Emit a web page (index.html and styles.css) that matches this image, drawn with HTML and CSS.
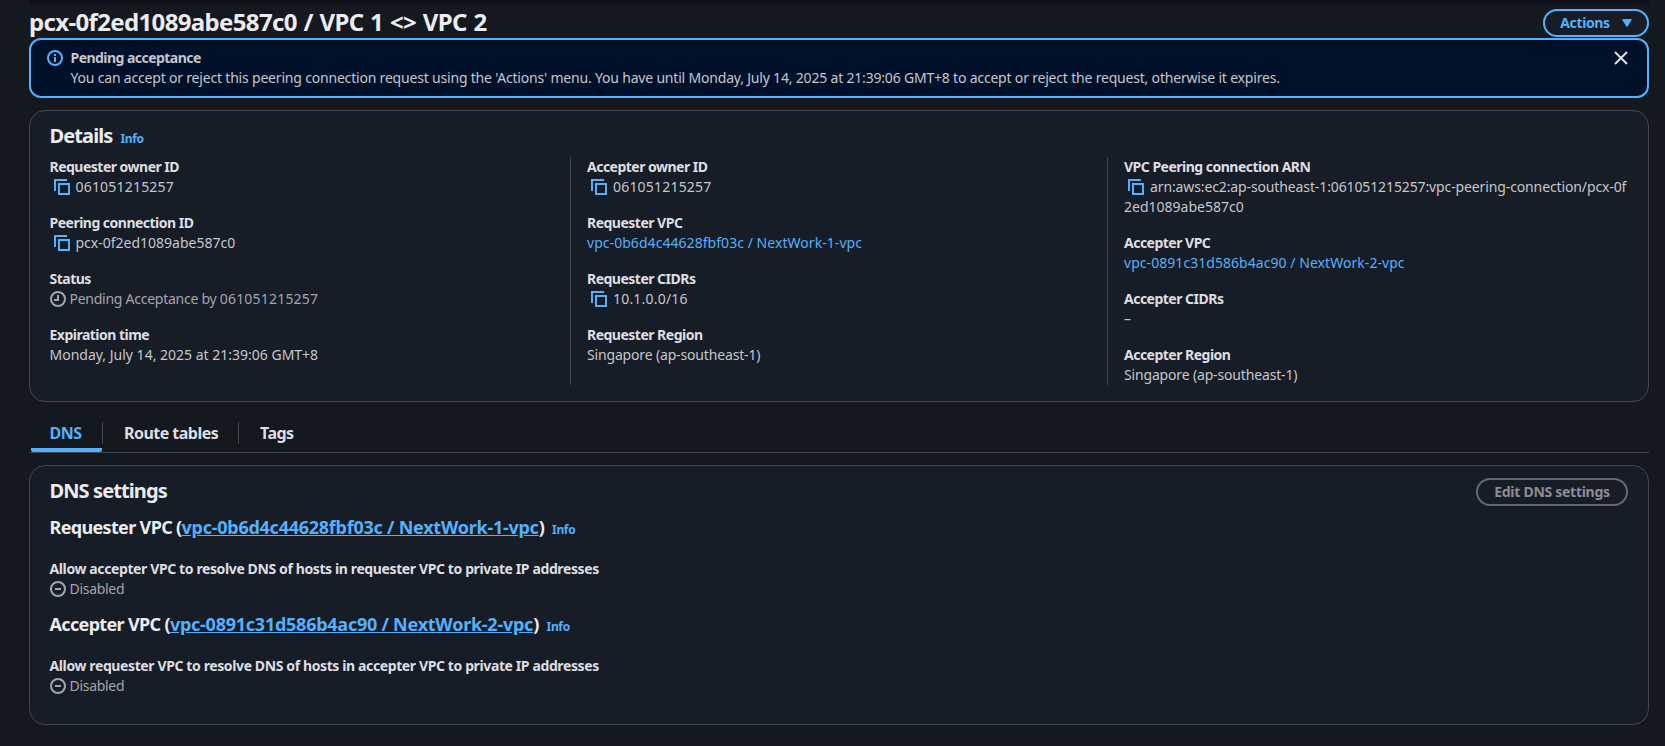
FILE: index.html
```html
<!DOCTYPE html>
<html lang="en">
<head>
<meta charset="utf-8">
<title>Peering connection details</title>
<link rel="stylesheet" href="styles.css">
</head>
<body>
<svg width="0" height="0" class="defs">
  <symbol id="copy" viewBox="0 0 16 16"><path d="M1 12V1h12M5 5h10v10H5z" fill="none" stroke="currentColor" stroke-width="2"/></symbol>
  <symbol id="clock" viewBox="0 0 16 16"><circle cx="8" cy="8" r="7" fill="none" stroke="currentColor" stroke-width="2"/><path d="M8 4v5H4" fill="none" stroke="currentColor" stroke-width="2"/></symbol>
  <symbol id="minus" viewBox="0 0 16 16"><circle cx="8" cy="8" r="7" fill="none" stroke="currentColor" stroke-width="2"/><path d="M5 8h6" fill="none" stroke="currentColor" stroke-width="2"/></symbol>
</svg>
<div class="page">
  <header class="topbar">
    <h1 class="title">pcx-0f2ed1089abe587c0 / VPC 1 &lt;&gt; VPC 2</h1>
    <button class="btn btn-actions">Actions <svg width="10" height="8" viewBox="0 0 10 8"><path d="M.6.6h8.8L5 7.6z" fill="currentColor" stroke="currentColor" stroke-linejoin="round"/></svg></button>
  </header>
  <section class="banner">
    <svg class="banner-icon" width="16" height="16" viewBox="0 0 16 16" fill="none" stroke="currentColor" stroke-width="2"><circle cx="8" cy="8" r="7"/><path d="M8 4v2M8 7v5"/></svg>
    <div class="banner-text">
      <div class="banner-title">Pending acceptance</div>
      <div class="banner-body">You can accept or reject this peering connection request using the 'Actions' menu. You have until Monday, July 14, 2025 at 21:39:06 GMT+8 to accept or reject the request, otherwise it expires.</div>
    </div>
    <svg class="close" width="16" height="16" viewBox="0 0 16 16" fill="none" stroke="currentColor" stroke-width="2"><path d="M2 2l12 12M14 2L2 14"/></svg>
  </section>

  <section class="card details">
    <h2 class="card-title">Details<a class="info">Info</a></h2>
    <div class="columns">
      <dl class="col">
        <div><dt>Requester owner ID</dt><dd class="ident"><svg class="copy"><use href="#copy"/></svg>061051215257</dd></div>
        <div><dt>Peering connection ID</dt><dd><svg class="copy"><use href="#copy"/></svg>pcx-0f2ed1089abe587c0</dd></div>
        <div><dt>Status</dt><dd class="status"><svg class="state"><use href="#clock"/></svg>Pending Acceptance by <span class="ident">061051215257</span></dd></div>
        <div><dt>Expiration time</dt><dd>Monday, July 14, 2025 at 21:39:06 GMT+8</dd></div>
      </dl>
      <dl class="col">
        <div><dt>Accepter owner ID</dt><dd class="ident"><svg class="copy"><use href="#copy"/></svg>061051215257</dd></div>
        <div><dt>Requester VPC</dt><dd><a class="link">vpc-0b6d4c44628fbf03c / NextWork-1-vpc</a></dd></div>
        <div><dt>Requester CIDRs</dt><dd class="ident"><svg class="copy"><use href="#copy"/></svg>10.1.0.0/16</dd></div>
        <div><dt>Requester Region</dt><dd class="prose">Singapore (ap-southeast-1)</dd></div>
      </dl>
      <dl class="col">
        <div><dt>VPC Peering connection ARN</dt><dd class="arn"><svg class="copy"><use href="#copy"/></svg>arn:aws:ec2:ap-southeast-1:061051215257:vpc-peering-connection/pcx-0f<br><span class="arn-rest">2ed1089abe587c0</span></dd></div>
        <div><dt>Accepter VPC</dt><dd><a class="link">vpc-0891c31d586b4ac90 / NextWork-2-vpc</a></dd></div>
        <div><dt>Accepter CIDRs</dt><dd>–</dd></div>
        <div><dt>Accepter Region</dt><dd class="prose">Singapore (ap-southeast-1)</dd></div>
      </dl>
    </div>
  </section>

  <nav class="tabs">
    <a class="tab tab-active">DNS</a>
    <a class="tab tab-routes">Route tables</a>
    <a class="tab">Tags</a>
  </nav>

  <section class="card dns">
    <div class="dns-head">
      <h2 class="card-title">DNS settings</h2>
      <button class="btn btn-disabled">Edit DNS settings</button>
    </div>
    <h3 class="sub sub-requester">Requester VPC (<a class="sublink">vpc-0b6d4c44628fbf03c / NextWork-1-vpc</a>)<a class="info">Info</a></h3>
    <dl class="setting"><dt>Allow accepter VPC to resolve DNS of hosts in requester VPC to private IP addresses</dt><dd class="status disabled"><svg class="state"><use href="#minus"/></svg>Disabled</dd></dl>
    <h3 class="sub">Accepter VPC (<a class="sublink">vpc-0891c31d586b4ac90 / NextWork-2-vpc</a>)<a class="info">Info</a></h3>
    <dl class="setting"><dt>Allow requester VPC to resolve DNS of hosts in accepter VPC to private IP addresses</dt><dd class="status disabled"><svg class="state"><use href="#minus"/></svg>Disabled</dd></dl>
  </section>
</div>
</body>
</html>
```

FILE: styles.css
```css
* { box-sizing: border-box; }
body {
  margin: 0;
  height: 746px;
  overflow: hidden;
  background: #14181f;
  color: #c6c6cd;
  font: 14px/20px "Noto Sans", "Open Sans", sans-serif;
  white-space: nowrap;
}
h1, h2, h3, dl, dd { margin: 0; }
.defs { position: absolute; }
.page {
  padding: 0 16px 0 29px;
  background: linear-gradient(#0d1019, #14181f 8px) no-repeat 29px 0 / 1620px 8px;
}
.topbar {
  display: flex;
  justify-content: space-between;
  height: 38px;
}
.title {
  padding-top: 7px;
  font-size: 24px;
  line-height: 30px;
  font-weight: 700;
  letter-spacing: -.65px;
  word-spacing: 1.1px;
  color: #ebebf0;
}
.btn {
  display: flex;
  align-items: center;
  justify-content: center;
  height: 28px;
  padding: 0;
  border: 2px solid;
  border-radius: 14px;
  background: #161d26;
  font: 700 14px/20px "Noto Sans", sans-serif;
}
.btn-actions { width: 106px; margin-top: 9px; gap: 12px; color: #53b1fd; letter-spacing: -.38px; }
.btn-disabled { width: 152px; color: #8c8c94; border-color: #656871; letter-spacing: -.28px; }
.banner {
  display: flex;
  height: 60px;
  padding: 8px 18px 0 16px;
  border: 2px solid #53b1fd;
  border-radius: 12px;
  background: #001129;
}
.banner-icon { margin: 2px 7.5px 0 0; color: #53b1fd; }
.banner-text { flex: 1; }
.banner-title { font-weight: 700; letter-spacing: -.54px; }
.banner-body { letter-spacing: -.191px; }
.close { margin-top: 2px; color: #dedee3; }
.card {
  border: 1px solid #424650;
  border-radius: 16px;
  background: #161d26;
  padding: 12px 20px 0 19.5px;
}
.card-title { font-size: 20px; line-height: 28px; font-weight: 700; letter-spacing: -.9px; color: #ebebf0; }
.info { margin-left: 8px; font-size: 12px; line-height: 1; font-weight: 700; color: #53b1fd; letter-spacing: -.35px; }
.link, .sublink { color: #53b1fd; }
.link { letter-spacing: .05px; }
.sublink { text-decoration: underline; letter-spacing: -.25px; }
.details { margin-top: 12px; height: 292px; padding-top: 11px; }
.columns {
  display: grid;
  grid-template-columns: 520.5px 537px 1fr;
  height: 228px;
  margin-top: 7px;
}
.col { display: flex; flex-direction: column; gap: 16px; }
.col + .col { padding-left: 16px; border-left: 1px solid #424650; }
dt { font-weight: 700; color: #dedee3; letter-spacing: -.51px; }
.ident { letter-spacing: .2px; }
.prose { letter-spacing: -.16px; }
.arn { letter-spacing: -.12px; }
.arn-rest { letter-spacing: 0; }
.copy { width: 16px; height: 16px; margin: 0 6px 0 4px; vertical-align: -3px; color: #53b1fd; }
.state { width: 16px; height: 16px; margin-right: 4px; vertical-align: -3px; }
.status { color: #a4a4ad; letter-spacing: -.26px; }
.tabs {
  display: flex;
  height: 51px;
  padding: 20px 0 0 2px;
  border-bottom: 1px solid #424650;
}
.tab {
  height: 22px;
  padding: 0 21px;
  font-size: 16px;
  line-height: 22px;
  font-weight: 700;
  letter-spacing: -.53px;
  color: #dedee3;
}
.tab-active {
  width: 71px;
  height: 30px;
  padding: 0 0 0 18.5px;
  border-bottom: 4px solid #53b1fd;
  border-radius: 2px;
  color: #53b1fd;
}
.tab-routes { width: 137px; border: solid #424650; border-width: 0 1px; }
.dns { margin-top: 12px; height: 260px; }
.dns-head { display: flex; justify-content: space-between; height: 28px; }
.dns-head .card-title { margin-top: -1px; }
.sub { font-size: 18px; line-height: 24px; font-weight: 700; letter-spacing: -.66px; color: #ebebf0; }
.sub-requester { margin-top: 9px; }
.setting { margin: 20px 0 13px; }
.setting dt { letter-spacing: -.385px; }
.disabled { letter-spacing: -.3px; }
```
